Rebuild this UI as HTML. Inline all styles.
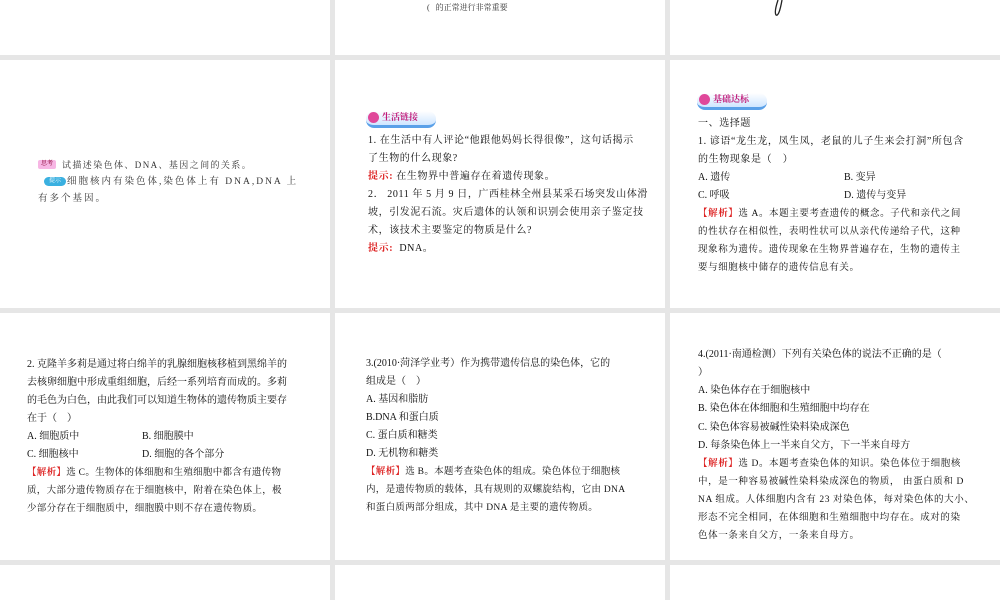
<!DOCTYPE html>
<html><head><meta charset="utf-8"><style>
body{margin:0;width:1000px;height:600px;background:#e6e6e6;position:relative;overflow:hidden;font-family:"Liberation Serif","Noto Serif CJK SC","Noto Sans CJK SC",serif;color:#111}
.s{position:absolute;background:#fff}
.t{position:absolute;font-size:10px;white-space:nowrap;line-height:18px}
.r{color:#d22}
.b{font-weight:bold}
.w{letter-spacing:0.6px}
.badge{position:absolute;height:14px;width:70px;border-radius:8px;background:linear-gradient(#fff,#cfe6ff);border-bottom:3px solid #5aa0e8}
.badge i{position:absolute;left:2px;top:1px;width:11px;height:11px;border-radius:50%;background:#e0489a}
.badge span{position:absolute;left:16px;top:0;font-size:9px;font-weight:bold;color:#c01878;line-height:13px}
</style></head><body>
<div class="s" style="left:0;top:0;width:330px;height:55px"></div>
<div class="s" style="left:335px;top:0;width:330px;height:55px"></div>
<div class="s" style="left:670px;top:0;width:330px;height:55px"></div>
<div class="s" style="left:0;top:60px;width:330px;height:248px"></div>
<div class="s" style="left:335px;top:60px;width:330px;height:248px"></div>
<div class="s" style="left:670px;top:60px;width:330px;height:248px"></div>
<div class="s" style="left:0;top:313px;width:330px;height:247px"></div>
<div class="s" style="left:335px;top:313px;width:330px;height:247px"></div>
<div class="s" style="left:670px;top:313px;width:330px;height:247px"></div>
<div class="s" style="left:0;top:565px;width:330px;height:35px"></div>
<div class="s" style="left:335px;top:565px;width:330px;height:35px"></div>
<div class="s" style="left:670px;top:565px;width:330px;height:35px"></div>

<div class="t" style="left:427px;top:0;font-size:8px;line-height:16px;color:#333">( &nbsp;&nbsp;的正常进行非常重要</div>
<svg style="position:absolute;left:770px;top:0" width="20" height="20"><path d="M8 0 Q4 12 6 15 Q9 17 12 0" fill="none" stroke="#222" stroke-width="1.3"/></svg>

<div style="position:absolute;left:38px;top:160px;width:18px;height:9px;background:#f7b6e4;border-radius:2px;font-size:6px;line-height:9px;text-align:center;color:#803">思考</div>
<div class="t" style="left:62px;top:156px;font-size:9px;color:#333;letter-spacing:1.4px">试描述染色体、DNA、基因之间的关系。</div>
<div style="position:absolute;left:44px;top:177px;width:22px;height:9px;background:#3ab0e0;border-radius:5px;font-size:6px;line-height:9px;text-align:center;color:#fff">提示</div>
<div class="t" style="left:67px;top:173px;font-size:9.5px;color:#333;letter-spacing:2px">细胞核内有染色体,染色体上有 DNA,DNA 上</div>
<div class="t" style="left:38px;top:190px;font-size:9.5px;color:#333;letter-spacing:2px">有多个基因。</div>

<div class="badge" style="left:366px;top:111px"><i></i><span>生活链接</span></div>
<div class="t w" style="left:368px;top:132px">1. 在生活中有人评论“他跟他妈妈长得很像”，这句话揭示</div>
<div class="t w" style="left:368px;top:150px">了生物的什么现象?</div>
<div class="t w" style="left:368px;top:168px"><span class="r b">提示:</span> 在生物界中普遍存在着遗传现象。</div>
<div class="t w" style="left:368px;top:186px">2． 2011 年 5 月 9 日，广西桂林全州县某采石场突发山体滑</div>
<div class="t w" style="left:368px;top:204px">坡，引发泥石流。灾后遗体的认领和识别会使用亲子鉴定技</div>
<div class="t w" style="left:368px;top:222px">术，该技术主要鉴定的物质是什么?</div>
<div class="t w" style="left:368px;top:240px"><span class="r b">提示:</span> &nbsp;DNA。</div>

<div class="badge" style="left:697px;top:93px"><i></i><span>基础达标</span></div>
<div class="t w" style="left:698px;top:115px">一、选择题</div>
<div class="t w" style="left:698px;top:133px">1. 谚语“龙生龙，凤生凤，老鼠的儿子生来会打洞”所包含</div>
<div class="t w" style="left:698px;top:151px">的生物现象是（　）</div>
<div class="t" style="left:698px;top:169px">A. 遗传</div><div class="t" style="left:844px;top:169px">B. 变异</div>
<div class="t" style="left:698px;top:187px">C. 呼吸</div><div class="t" style="left:844px;top:187px">D. 遗传与变异</div>
<div class="t w" style="left:698px;top:205px;font-size:9.5px"><span class="r b">【解析】</span>选 A。本题主要考查遗传的概念。子代和亲代之间</div>
<div class="t w" style="left:698px;top:223px;font-size:9.5px">的性状存在相似性，表明性状可以从亲代传递给子代，这种</div>
<div class="t w" style="left:698px;top:241px;font-size:9.5px">现象称为遗传。遗传现象在生物界普遍存在，生物的遗传主</div>
<div class="t w" style="left:698px;top:259px;font-size:9.5px">要与细胞核中储存的遗传信息有关。</div>

<div class="t" style="left:27px;top:356px">2. 克隆羊多莉是通过将白绵羊的乳腺细胞核移植到黑绵羊的</div>
<div class="t" style="left:27px;top:374px">去核卵细胞中形成重组细胞，后经一系列培育而成的。多莉</div>
<div class="t" style="left:27px;top:392px">的毛色为白色，由此我们可以知道生物体的遗传物质主要存</div>
<div class="t" style="left:27px;top:410px">在于（　）</div>
<div class="t" style="left:27px;top:428px">A. 细胞质中</div><div class="t" style="left:142px;top:428px">B. 细胞膜中</div>
<div class="t" style="left:27px;top:446px">C. 细胞核中</div><div class="t" style="left:142px;top:446px">D. 细胞的各个部分</div>
<div class="t" style="left:27px;top:464px;font-size:9.5px;letter-spacing:0.3px"><span class="r b">【解析】</span>选 C。生物体的体细胞和生殖细胞中都含有遗传物</div>
<div class="t" style="left:27px;top:482px;font-size:9.5px;letter-spacing:0.3px">质，大部分遗传物质存在于细胞核中，附着在染色体上，极</div>
<div class="t" style="left:27px;top:500px;font-size:9.5px;letter-spacing:0.3px">少部分存在于细胞质中，细胞膜中则不存在遗传物质。</div>

<div class="t" style="left:366px;top:355px">3.(2010·菏泽学业考）作为携带遗传信息的染色体，它的</div>
<div class="t" style="left:366px;top:373px">组成是（　）</div>
<div class="t" style="left:366px;top:391px">A. 基因和脂肪</div>
<div class="t" style="left:366px;top:409px">B.DNA 和蛋白质</div>
<div class="t" style="left:366px;top:427px">C. 蛋白质和糖类</div>
<div class="t" style="left:366px;top:445px">D. 无机物和糖类</div>
<div class="t" style="left:366px;top:463px;font-size:9.5px;letter-spacing:0.3px"><span class="r b">【解析】</span>选 B。本题考查染色体的组成。染色体位于细胞核</div>
<div class="t" style="left:366px;top:481px;font-size:9.5px;letter-spacing:0.3px">内，是遗传物质的载体，具有规则的双螺旋结构，它由 DNA</div>
<div class="t" style="left:366px;top:499px;font-size:9.5px;letter-spacing:0.3px">和蛋白质两部分组成，其中 DNA 是主要的遗传物质。</div>

<div class="t" style="left:698px;top:346px">4.(2011·南通检测）下列有关染色体的说法不正确的是（</div>
<div class="t" style="left:698px;top:364px">）</div>
<div class="t" style="left:698px;top:382px">A. 染色体存在于细胞核中</div>
<div class="t" style="left:698px;top:400px">B. 染色体在体细胞和生殖细胞中均存在</div>
<div class="t" style="left:698px;top:419px">C. 染色体容易被碱性染料染成深色</div>
<div class="t" style="left:698px;top:437px">D. 每条染色体上一半来自父方，下一半来自母方</div>
<div class="t w" style="left:698px;top:455px;font-size:9.5px"><span class="r b">【解析】</span>选 D。本题考查染色体的知识。染色体位于细胞核</div>
<div class="t w" style="left:698px;top:473px;font-size:9.5px">中，是一种容易被碱性染料染成深色的物质， 由蛋白质和 D</div>
<div class="t w" style="left:698px;top:491px;font-size:9.5px">NA 组成。人体细胞内含有 23 对染色体，每对染色体的大小、</div>
<div class="t w" style="left:698px;top:509px;font-size:9.5px">形态不完全相同，在体细胞和生殖细胞中均存在。成对的染</div>
<div class="t w" style="left:698px;top:527px;font-size:9.5px">色体一条来自父方，一条来自母方。</div>
</body></html>
